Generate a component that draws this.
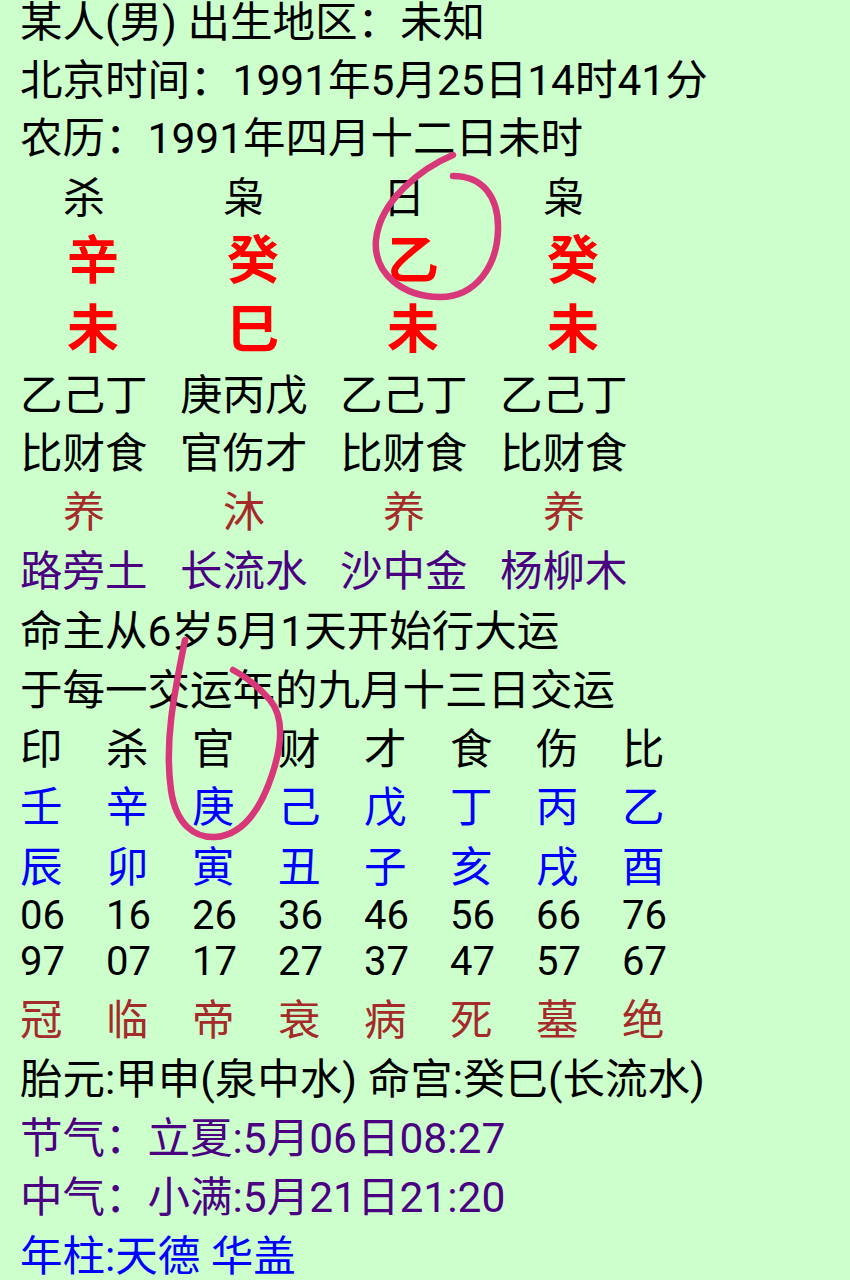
import React from "react";

const four = "grid grid-cols-[repeat(4,160px)] whitespace-nowrap";
const eight = "grid grid-cols-[repeat(8,86px)] whitespace-nowrap";

function Row4({ items, className }) {
  return (
    <div className={`${four} ${className}`}>
      {items.map((t, i) => (
        <div key={i}>{t}</div>
      ))}
    </div>
  );
}

function Row8({ items, className }) {
  return (
    <div className={`${eight} ${className}`}>
      {items.map((t, i) => (
        <div key={i}>{t}</div>
      ))}
    </div>
  );
}

export default function App() {
  return (
    <div className="relative h-[1280px] w-[850px] overflow-hidden bg-[#ccffcc] font-[family-name:Roboto,'Noto_Sans_CJK_SC',sans-serif] text-[42.5px] text-black">
      <div className="pl-[20px]">
        <div className="h-[52px] whitespace-nowrap pb-[6px] leading-[46px]">某人(男) 出生地区：未知</div>
        <div className="h-[58px] whitespace-nowrap leading-[58px]">北京时间：1991年5月25日14时41分</div>
        <div className="h-[58px] whitespace-nowrap leading-[58px]">农历：1991年四月十二日未时</div>

        <Row4 items={["杀", "枭", "日", "枭"]} className="h-[62px] pl-[43px] text-[42px] leading-[62px]" />
        <Row4
          items={["辛", "癸", "乙", "癸"]}
          className="h-[64px] pl-[47px] text-[52px] font-bold leading-[64px] text-[#ff0000]"
        />
        <Row4
          items={["未", "巳", "未", "未"]}
          className="h-[74px] pl-[47px] text-[52px] font-bold leading-[74px] text-[#ff0000]"
        />
        <Row4 items={["乙己丁", "庚丙戊", "乙己丁", "乙己丁"]} className="h-[56px] leading-[56px]" />
        <Row4 items={["比财食", "官伤才", "比财食", "比财食"]} className="h-[60px] leading-[60px]" />
        <Row4
          items={["养", "沐", "养", "养"]}
          className="h-[58px] pl-[43px] text-[42px] leading-[58px] text-[#a52a2a]"
        />
        <Row4
          items={["路旁土", "长流水", "沙中金", "杨柳木"]}
          className="h-[60px] leading-[60px] text-[#4b0082]"
        />

        <div className="h-[60px] whitespace-nowrap leading-[60px]">命主从6岁5月1天开始行大运</div>
        <div className="h-[58px] whitespace-nowrap leading-[58px]">于每一交运年的九月十三日交运</div>

        <Row8 items={["印", "杀", "官", "财", "才", "食", "伤", "比"]} className="h-[60px] leading-[60px]" />
        <Row8
          items={["壬", "辛", "庚", "己", "戊", "丁", "丙", "乙"]}
          className="h-[56px] leading-[56px] text-[#0000ff]"
        />
        <Row8
          items={["辰", "卯", "寅", "丑", "子", "亥", "戌", "酉"]}
          className="h-[64px] leading-[64px] text-[#0000ff]"
        />
        <Row8
          items={["06", "16", "26", "36", "46", "56", "66", "76"]}
          className="h-[32px] text-[40px] leading-[32px]"
        />
        <Row8
          items={["97", "07", "17", "27", "37", "47", "57", "67"]}
          className="h-[60px] text-[40px] leading-[60px]"
        />
        <Row8
          items={["冠", "临", "帝", "衰", "病", "死", "墓", "绝"]}
          className="h-[58px] leading-[58px] text-[#a52a2a]"
        />

        <div className="h-[60px] whitespace-nowrap leading-[60px]">胎元:甲申(泉中水) 命宫:癸巳(长流水)</div>
        <div className="h-[58px] whitespace-nowrap leading-[58px] text-[#4b0082]">节气：立夏:5月06日08:27</div>
        <div className="h-[60px] whitespace-nowrap leading-[60px] text-[#4b0082]">中气：小满:5月21日21:20</div>
        <div className="h-[58px] whitespace-nowrap leading-[58px] text-[#0000ff]">年柱:天德 华盖</div>
      </div>

      <svg
        className="pointer-events-none absolute left-0 top-0"
        width="850"
        height="1280"
        viewBox="0 0 850 1280"
        fill="none"
      >
        <path
          d="M453,155 C422,168 380,200 376,240 C373,275 405,297 440,297 C476,297 497,266 498,230 C499,196 482,176 453,176"
          stroke="#d8377a"
          strokeWidth="6.5"
          strokeLinecap="round"
          strokeLinejoin="round"
        />
        <path
          d="M185,640 C175,690 164,740 171,790 C176,825 195,838 215,837 C245,835 262,805 272,775 C282,745 285,718 270,700 C258,686 246,677 233,670"
          stroke="#d8377a"
          strokeWidth="6.5"
          strokeLinecap="round"
          strokeLinejoin="round"
        />
      </svg>
    </div>
  );
}
